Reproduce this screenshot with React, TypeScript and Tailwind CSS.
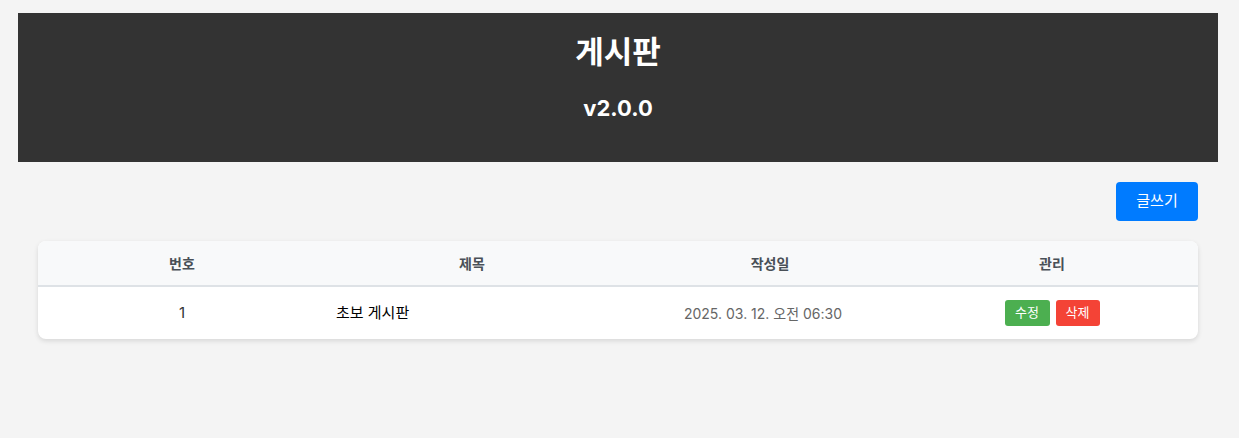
const FONT = "font-['Inter','Noto_Sans_CJK_KR',sans-serif]";

type Post = {
  id: number;
  title: string;
  createdAt: string;
};

const POSTS: Post[] = [{ id: 1, title: "초보 게시판", createdAt: "2025. 03. 12. 오전 06:30" }];

export default function App() {
  return (
    <div className={`min-h-[438px] w-full bg-[#f4f4f4] pt-[13px] ${FONT}`}>
      <div className="ml-[18px] w-[1200px]">
        {/* Header */}
        <header className="flex h-[149px] flex-col items-center bg-[#333333] pt-[20px] text-white">
          <h1 className="text-[31px] font-bold leading-[38px]">게시판</h1>
          <h2 className="mt-[24px] text-[22px] font-bold leading-[26px]">v2.0.0</h2>
        </header>

        <main className="p-[20px]">
          <div className="flex justify-end">
            <button className="h-[39px] w-[82px] rounded-[4px] bg-[#007bff] text-[15px] text-white">
              글쓰기
            </button>
          </div>

          <div className="mt-[20px] overflow-hidden rounded-[8px] bg-white shadow-[0_2px_5px_rgba(0,0,0,0.12)]">
            <div className="grid h-[46px] grid-cols-[288px_292px_304px_260px] items-center border-b-2 border-[#dee2e6] bg-[#f8f9fa] text-[14px] font-bold text-[#495057]">
              <div className="text-center">번호</div>
              <div className="text-center">제목</div>
              <div className="text-center">작성일</div>
              <div className="text-center">관리</div>
            </div>
            {POSTS.map((post) => (
              <div
                key={post.id}
                className="grid h-[52px] grid-cols-[288px_292px_304px_260px] items-center text-[15px]"
              >
                <div className="text-center text-[#333]">{post.id}</div>
                <div className="pl-[10px] text-black">{post.title}</div>
                <div className="pr-[14px] text-center text-[14px] text-[#666]">{post.createdAt}</div>
                <div className="flex justify-center gap-[6px]">
                  <button className="h-[26px] w-[45px] rounded-[3px] bg-[#4caf50] text-[13px] text-white">
                    수정
                  </button>
                  <button className="h-[26px] w-[44px] rounded-[3px] bg-[#f44336] text-[13px] text-white">
                    삭제
                  </button>
                </div>
              </div>
            ))}
          </div>
        </main>
      </div>
    </div>
  );
}
